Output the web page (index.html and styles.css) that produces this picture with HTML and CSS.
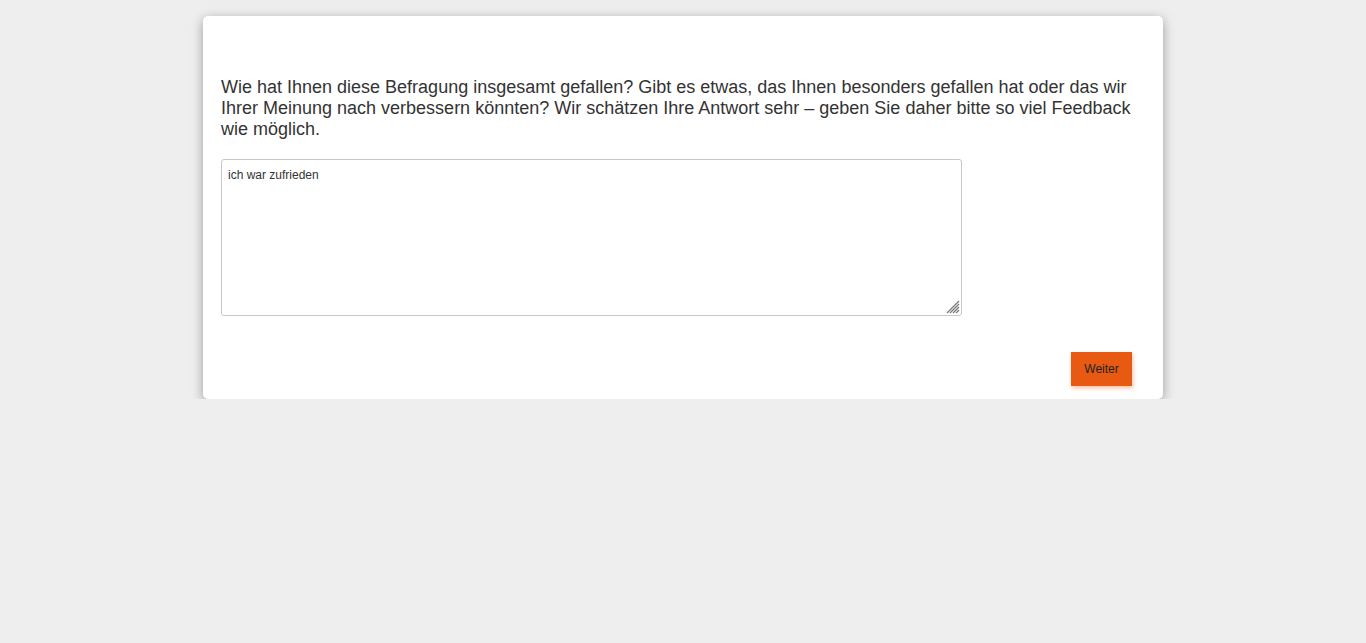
FILE: index.html
```html
<!DOCTYPE html>
<html lang="de">
<head>
    <meta charset="UTF-8">
    <meta name="viewport" content="width=device-width, initial-scale=1.0">
    <title>Befragung</title>
    <link rel="stylesheet" href="styles.css">
</head>
<body>

    <div class="card">
        <div class="question">
            Wie hat Ihnen diese Befragung insgesamt gefallen? Gibt es etwas, das Ihnen besonders gefallen hat oder das wir Ihrer Meinung nach verbessern könnten? Wir schätzen Ihre Antwort sehr – geben Sie daher bitte so viel Feedback wie möglich.
        </div>
        <div class="answer-box">
            <textarea class="answer">ich war zufrieden</textarea>
            <!-- Griff zum Vergrößern -->
            <svg class="grip" width="14" height="14" viewBox="0 0 14 14">
                <path d="M13 1 L1 13 M13 4 L4 13 M13 7 L7 13 M13 10 L10 13" stroke="#777" stroke-width="1.2" fill="none"/>
            </svg>
        </div>
        <div class="actions">
            <button class="next">Weiter</button>
        </div>
    </div>

</body>
</html>
```

FILE: styles.css
```css
* {
    box-sizing: border-box;
    margin: 0;
    padding: 0;
}

body {
    background-color: #eeeeee;
    font-family: "Liberation Sans", Arial, sans-serif;
    color: #333;
}

.card {
    width: 960px;
    margin: 16px auto 0;
    background-color: #fff;
    border-radius: 5px;
    box-shadow: 0 3px 12px rgba(0, 0, 0, 0.35);
    padding: 61px 31px 13px 18px;
}

.question {
    font-size: 18px;
    line-height: 21px;
    color: #333;
}

.answer-box {
    position: relative;
    width: 741px;
    margin-top: 19px;
}

.answer {
    display: block;
    width: 741px;
    height: 157px;
    border: 1px solid #c8c8c8;
    border-radius: 3px;
    padding: 8px 6px;
    font-family: "Liberation Sans", Arial, sans-serif;
    font-size: 12px;
    color: #333;
    resize: none;
}

.grip {
    position: absolute;
    right: 2px;
    bottom: 2px;
    pointer-events: none;
}

.actions {
    display: flex;
    justify-content: flex-end;
    margin-top: 36px;
}

.next {
    width: 61px;
    height: 34px;
    background-color: #e85a12;
    border: none;
    color: #222;
    font-family: "Liberation Sans", Arial, sans-serif;
    font-size: 12px;
    box-shadow: 1px 2px 4px rgba(232, 90, 18, 0.4);
    cursor: pointer;
}
```
